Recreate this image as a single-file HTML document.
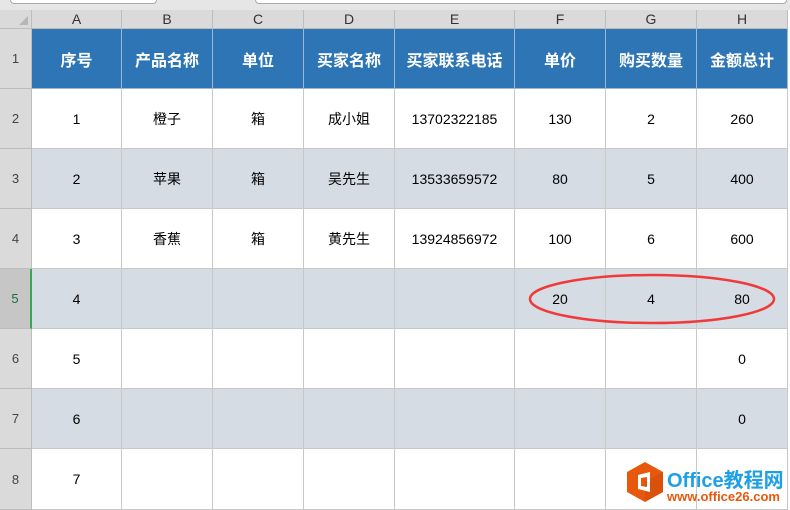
<!DOCTYPE html>
<html><head><meta charset="utf-8"><style>
body{margin:0;width:790px;height:510px;overflow:hidden;background:#fff;font-family:"Liberation Sans","Noto Sans CJK SC",sans-serif;position:relative}
.c{position:absolute;box-sizing:border-box;display:flex;align-items:center;justify-content:center;font-size:14px;color:#000;border-right:1px solid #c8c8c8;border-bottom:1px solid #c8c8c8}
.ch{background:#dadada;color:#333;font-size:14px;border-color:#bdbdbd}
.rh{background:#dadada;color:#444;font-size:13px;border-color:#bdbdbd}
.h{background:#2E75B6;color:#fff;font-weight:bold;font-size:16px;border-color:#9db7d3}
.g{background:#D6DCE4}
</style></head><body>
<div style="position:absolute;left:0;top:0;width:790px;height:10px;background:#e6e6e6"></div>
<div style="position:absolute;left:10px;top:-6px;width:145px;height:8px;border:1px solid #aaa;border-radius:4px;background:#fff"></div>
<div style="position:absolute;left:255px;top:-6px;width:530px;height:8px;border:1px solid #aaa;border-radius:4px;background:#fff"></div>
<div id="g"></div>
<script>
const X=[0,32,122,213,304,395,515,606,697,788];
const Y=[10,29,89,149,209,269,329,389,449,510];
const L="ABCDEFGH";
const H=["序号","产品名称","单位","买家名称","买家联系电话","单价","购买数量","金额总计"];
const D=[["1","橙子","箱","成小姐","13702322185","130","2","260"],["2","苹果","箱","吴先生","13533659572","80","5","400"],["3","香蕉","箱","黄先生","13924856972","100","6","600"],["4","","","","","20","4","80"],["5","","","","","","","0"],["6","","","","","","","0"],["7","","","","","","",""]];
let s='';
function cell(x,y,w,h,cls,t,st=''){s+=`<div class="c ${cls}" style="left:${x}px;top:${y}px;width:${w}px;height:${h}px;${st}">${t}</div>`}
cell(0,10,32,19,'ch','<span style="position:absolute;right:3px;bottom:3px;width:0;height:0;border-left:9px solid transparent;border-bottom:9px solid #b5b5b5"></span>');
for(let i=0;i<8;i++)cell(X[i+1],10,X[i+2]-X[i+1],19,'ch',L[i]);
for(let r=0;r<8;r++){
 let y=Y[r+1],h=Y[r+2]-y;
 cell(0,y,32,h,'rh',r+1,r==4?'background:#c6c6c6;color:#1e6e40;border-right:2px solid #3aa457':'');
 for(let i=0;i<8;i++){
  let cls=r==0?'h':(r%2==0?'g':'');
  let t=r==0?H[i]:D[r-1][i];
  cell(X[i+1],y,X[i+2]-X[i+1],h,cls,t);
 }
}
document.getElementById('g').innerHTML=s;
</script>
<svg style="position:absolute;left:0;top:0" width="790" height="510">
<ellipse cx="652" cy="299" rx="122" ry="24" fill="none" stroke="#f03a3a" stroke-width="2.5"/>
<polygon points="645,462 663,472 663,492 645,502 627,492 627,472" fill="#e8580c"/>
<polygon points="645,502 663,492 663,472 645,482" fill="#c94a08" opacity="0.5"/>
<path d="M638,475 L650,472 L650,492 L638,489 Z M641,478 L641,486 L647,487 L647,477 Z" fill="#fff" fill-rule="evenodd"/>
<text x="667" y="487" font-family="Liberation Sans,Noto Sans CJK SC,sans-serif" font-weight="bold" font-size="20" fill="#1ea0e6">Office教程网</text>
<text x="667" y="501" font-family="Liberation Sans,sans-serif" font-weight="bold" font-size="13" fill="#e8580c">www.office26.com</text>
</svg>
</body></html>
